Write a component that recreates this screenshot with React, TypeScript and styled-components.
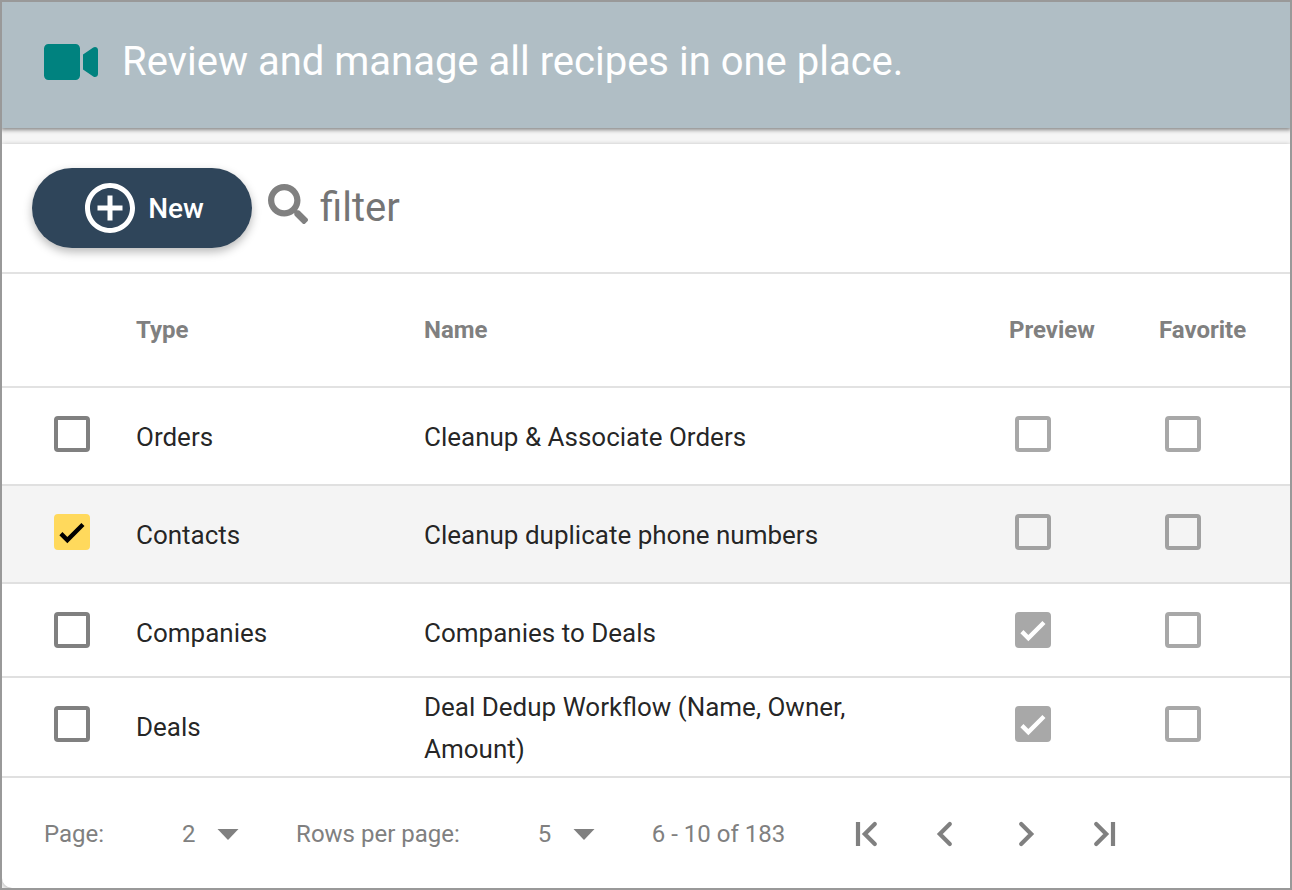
import React from "react";
import styled, { createGlobalStyle, css } from "styled-components";
import { FaSearch, FaVideo } from "react-icons/fa";
import { MdAddCircleOutline } from "react-icons/md";

const GlobalStyle = createGlobalStyle`
  *, *::before, *::after { box-sizing: border-box; }
  body {
    margin: 0;
    font-family: Roboto, "Liberation Sans", sans-serif;
    color: rgba(0, 0, 0, 0.87);
    background: #f5f5f5;
  }
  button, input, select { font-family: inherit; }
`;

const Frame = styled.div`
  display: flex;
  flex-direction: column;
  min-height: 100vh;
  border: 2px solid #999;
  background: #f5f5f5;
  overflow: hidden;
`;

const Header = styled.header`
  display: flex;
  align-items: center;
  gap: 24px;
  height: 126px;
  padding: 0 42px 6px;
  background: #b0bec5;
  color: #fff;
  box-shadow: 0 1px 4px 1px rgba(0, 0, 0, 0.45);
  position: relative;
`;

const VideoIcon = styled(FaVideo)`
  width: 54px;
  height: 48px;
  flex: none;
  color: #00827f;
`;

const Title = styled.h1`
  margin: 0;
  font-size: 40px;
  font-weight: 400;
  line-height: 48px;
`;

const Card = styled.main`
  flex: 1;
  display: flex;
  flex-direction: column;
  margin-top: 16px;
  background: #fff;
  border-bottom-left-radius: 10px;
  box-shadow: 0 1px 5px rgba(0, 0, 0, 0.3);
`;

const Toolbar = styled.div`
  display: flex;
  align-items: center;
  gap: 16px;
  height: 130px;
  padding: 0 30px;
  border-bottom: 2px solid #e2e2e2;
`;

const NewButton = styled.button`
  display: flex;
  align-items: center;
  justify-content: center;
  gap: 8px;
  width: 220px;
  height: 80px;
  padding: 0;
  border: 0;
  border-radius: 40px;
  background: #2f455a;
  color: #fff;
  font-size: 28px;
  font-weight: 500;
  box-shadow: 0 4px 10px rgba(0, 0, 0, 0.28);

  svg {
    width: 60px;
    height: 60px;
  }
`;

const FilterLabel = styled.label`
  flex: 1;
  display: flex;
  align-items: center;
  gap: 12px;
  padding-bottom: 8px;
  color: #808080;

  svg {
    width: 40px;
    height: 40px;
    flex: none;
  }
`;

const FilterInput = styled.input`
  flex: 1;
  min-width: 0;
  height: 56px;
  padding: 6px 0 0;
  border: 0;
  outline: 0;
  background: transparent;
  font-size: 40px;

  &::placeholder {
    color: #757575;
    opacity: 1;
  }
`;

const Table = styled.table`
  width: 100%;
  table-layout: fixed;
  border-spacing: 0;
`;

const HeadCell = styled.th<{ $width?: number }>`
  ${({ $width }) => $width && css`width: ${$width}px;`}
  height: 114px;
  padding: 0 0 0 2px;
  border-bottom: 2px solid #e2e2e2;
  color: #808080;
  font-size: 24px;
  font-weight: 700;
  text-align: left;
`;

const Row = styled.tr<{ $height: number; $selected?: boolean }>`
  height: ${({ $height }) => $height}px;
  background: ${({ $selected }) => ($selected ? "#f4f4f4" : "#fff")};
`;

const cell = css`
  border-bottom: 2px solid #e0e0e0;
  vertical-align: top;
`;

const TextCell = styled.td<{ $wrapped?: boolean }>`
  ${cell}
  padding: ${({ $wrapped }) => ($wrapped ? "8px 120px 6px 2px" : "28px 0 0 2px")};
  font-size: 26px;
  line-height: 42px;
`;

const BoxCell = styled.td<{ $indent: number }>`
  ${cell}
  padding: 28px 0 0 ${({ $indent }) => $indent}px;
`;

const CheckWrap = styled.span`
  display: grid;
  width: 36px;
  height: 36px;

  & > * { grid-area: 1 / 1; }
`;

const CheckInput = styled.input`
  appearance: none;
  width: 36px;
  height: 36px;
  margin: 0;
  border: 4px solid #808080;
  border-radius: 4px;

  &:checked { border-color: #ffd95c; background: #ffd95c; }
  &:disabled { border-color: rgba(0, 0, 0, 0.34); }
  &:disabled:checked { border-color: #a8a8a8; background: #a8a8a8; }
`;

const CheckMark = styled.svg<{ $light?: boolean }>`
  width: 36px;
  height: 36px;
  fill: none;
  stroke: ${({ $light }) => ($light ? "#fff" : "#000")};
  stroke-width: 2.9;
  pointer-events: none;
`;

const Footer = styled.footer`
  flex: 1;
  display: flex;
  align-items: center;
  min-height: 110px;
  padding: 2px 42px 0;
  color: #808080;
  font-size: 24px;
`;

const PickerLabel = styled.label`
  display: flex;
  align-items: center;
  gap: 78px;
  margin-right: 57px;
`;

const PickerBox = styled.span`
  display: grid;
  align-items: center;
  width: 57px;

  & > * { grid-area: 1 / 1; }

  svg {
    justify-self: end;
    width: 22px;
    height: 11px;
    fill: #808080;
    pointer-events: none;
  }
`;

const Picker = styled.select`
  appearance: none;
  width: 100%;
  padding: 0;
  border: 0;
  background: transparent;
  color: inherit;
  font-size: 24px;
`;

const Pager = styled.nav`
  display: flex;
  gap: 33px;
  margin-left: 55px;
`;

const PagerButton = styled.button`
  width: 48px;
  height: 48px;
  padding: 0;
  border: 0;
  background: transparent;
  color: #808080;

  svg {
    display: block;
    width: 48px;
    height: 48px;
    fill: none;
    stroke: currentColor;
    stroke-width: 2.1;
  }
`;

interface CheckboxProps {
  label: string;
  checked?: boolean;
  disabled?: boolean;
}

function Checkbox({ label, checked = false, disabled }: CheckboxProps) {
  const [on, setOn] = React.useState(checked);
  return (
    <CheckWrap>
      <CheckInput
        type="checkbox"
        aria-label={label}
        checked={on}
        disabled={disabled}
        onChange={(e) => setOn(e.target.checked)}
      />
      {on && (
        <CheckMark $light={disabled} viewBox="0 0 24 24" aria-hidden>
          <path d="M4.6 13.1 8.9 17.4 19.3 7" />
        </CheckMark>
      )}
    </CheckWrap>
  );
}

interface Recipe {
  type: string;
  name: string;
  height: number;
  selected?: boolean;
  preview?: boolean;
  wrapped?: boolean;
}

const recipes: Recipe[] = [
  { type: "Orders", name: "Cleanup & Associate Orders", height: 98 },
  { type: "Contacts", name: "Cleanup duplicate phone numbers", height: 98, selected: true },
  { type: "Companies", name: "Companies to Deals", height: 94, preview: true },
  { type: "Deals", name: "Deal Dedup Workflow (Name, Owner, Amount)", height: 100, preview: true, wrapped: true },
];

const pagerIcons = [
  { label: "First page", chevron: "M17.4 7 12.4 12l5 5", bar: "M9 6v12" },
  { label: "Previous page", chevron: "M14.4 7 9.4 12l5 5" },
  { label: "Next page", chevron: "M9.6 7l5 5-5 5" },
  { label: "Last page", chevron: "M6.6 7l5 5-5 5", bar: "M15 6v12" },
];

function PagePicker({ label, value }: { label: string; value: string }) {
  return (
    <PickerLabel>
      {label}
      <PickerBox>
        <Picker defaultValue={value}>
          <option>{value}</option>
        </Picker>
        <svg viewBox="0 0 22 11" aria-hidden>
          <path d="M0.5 0h21L11 11z" />
        </svg>
      </PickerBox>
    </PickerLabel>
  );
}

export default function App() {
  return (
    <>
      <GlobalStyle />
      <Frame>
        <Header>
          <VideoIcon aria-hidden />
          <Title>Review and manage all recipes in one place.</Title>
        </Header>
        <Card>
          <Toolbar>
            <NewButton type="button">
              <MdAddCircleOutline aria-hidden />
              New
            </NewButton>
            <FilterLabel>
              <FaSearch aria-hidden />
              <FilterInput type="text" placeholder="filter" aria-label="filter" />
            </FilterLabel>
          </Toolbar>
          <Table>
            <thead>
              <tr>
                <HeadCell $width={132} aria-label="Select" />
                <HeadCell $width={288}>Type</HeadCell>
                <HeadCell>Name</HeadCell>
                <HeadCell $width={150}>Preview</HeadCell>
                <HeadCell $width={133}>Favorite</HeadCell>
              </tr>
            </thead>
            <tbody>
              {recipes.map((r) => (
                <Row key={r.type} $height={r.height} $selected={r.selected}>
                  <BoxCell $indent={52}>
                    <Checkbox label={`Select ${r.name}`} checked={r.selected} />
                  </BoxCell>
                  <TextCell>{r.type}</TextCell>
                  <TextCell $wrapped={r.wrapped}>{r.name}</TextCell>
                  <BoxCell $indent={8}>
                    <Checkbox label={`Preview ${r.name}`} checked={r.preview} disabled />
                  </BoxCell>
                  <BoxCell $indent={8}>
                    <Checkbox label={`Favorite ${r.name}`} disabled />
                  </BoxCell>
                </Row>
              ))}
            </tbody>
          </Table>
          <Footer>
            <PagePicker label="Page:" value="2" />
            <PagePicker label="Rows per page:" value="5" />
            <span>6 - 10 of 183</span>
            <Pager aria-label="Pages">
              {pagerIcons.map(({ label, chevron, bar }) => (
                <PagerButton key={label} type="button" aria-label={label}>
                  <svg viewBox="0 0 24 24" aria-hidden>
                    <path d={chevron} strokeLinecap="round" />
                    {bar && <path d={bar} />}
                  </svg>
                </PagerButton>
              ))}
            </Pager>
          </Footer>
        </Card>
      </Frame>
    </>
  );
}
